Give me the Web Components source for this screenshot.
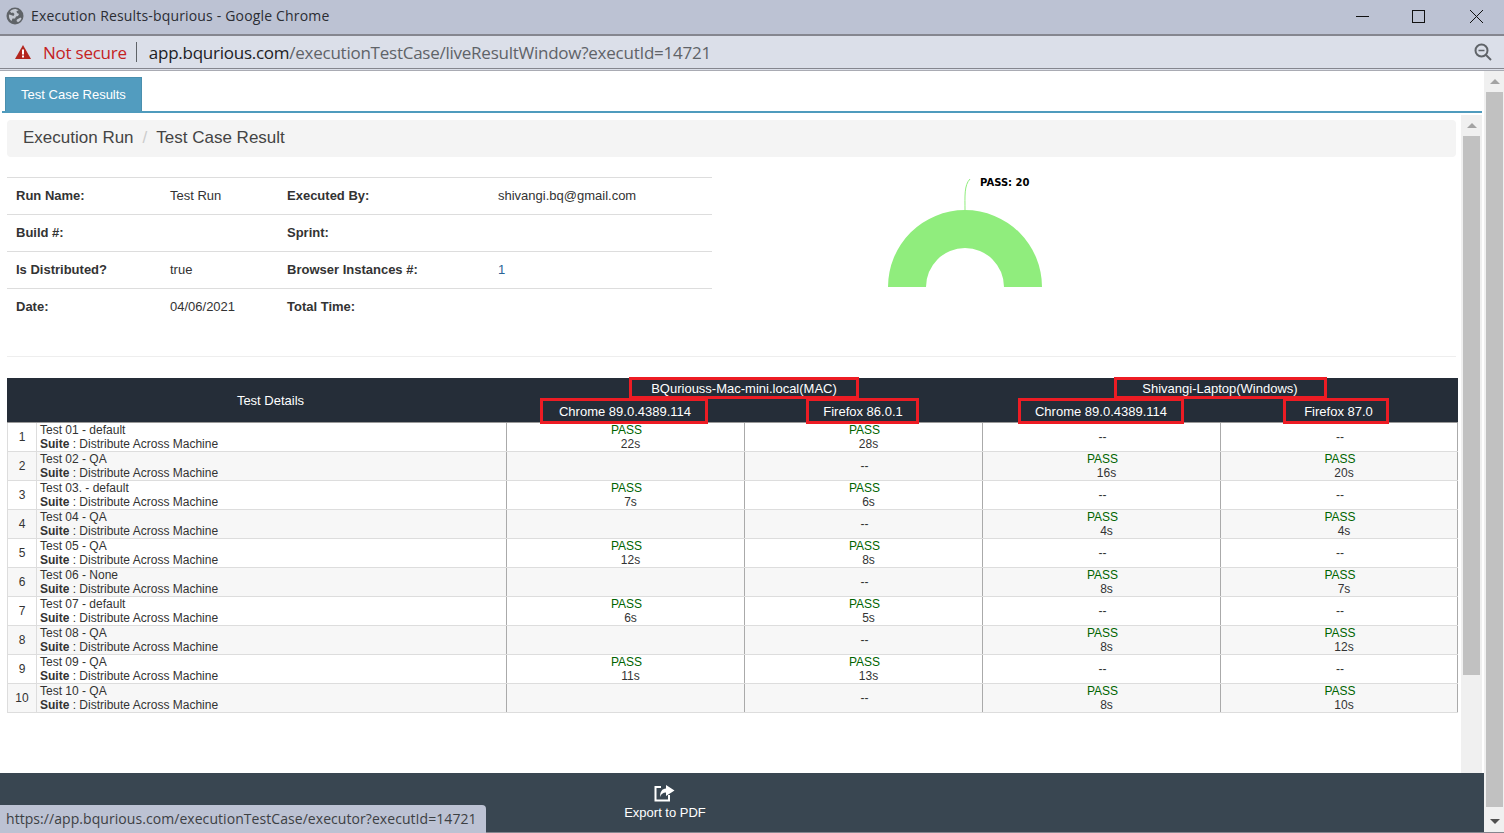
<!DOCTYPE html>
<html lang="en">
<head>
<meta charset="utf-8">
<title>Execution Results-bqurious</title>
<style>
html, body { margin: 0; height: 100%; overflow: hidden; background: #fff; }
body { font-family: "Liberation Sans", Arial, sans-serif; }
</style>
</head>
<body>
<app-window></app-window>
<script>
// Little helper, most parts here are static markup with a style block.
function define (tag, html) {
  customElements.define(tag, class extends HTMLElement {
    constructor () {
      super()
      this.attachShadow({ mode: 'open' }).innerHTML = html
    }
  })
}

define('title-bar', `
<style>
:host { display: flex; align-items: center; height: 34px; background: #bcc2d3; border-bottom: 2px solid #85868f; font: 14px "Open Sans", sans-serif; color: #2b2d33; }
.globe { margin-left: 6px; width: 18px; height: 18px; flex: none; margin-bottom: 3px; }
.name { margin-left: 7px; flex: 1; letter-spacing: .17px; margin-bottom: 3px; }
svg.win { flex: none; display: block; }
</style>
<svg class="globe" viewBox="0 0 18 18">
  <circle cx="9" cy="9" r="8.5" fill="#5f6368"/>
  <path d="M9 2C7 2.2 5 3 4 4.5L5.5 6 7 5.5 8.5 7 7.5 9 5 8 3 7.5C2.5 10 3.5 12.5 5.5 14L6.5 11.5 9 11.5 10 9.5 12 9 13 7 11 6 10.5 4 12.500 3.500C11.500 2.500 10 2 9 2Z" fill="#c3c7d0"/>
  <path d="M11 12.500L14.500 10.500 15.500 11.500C15 13 13.500 14.500 12 15.200L10.500 14Z" fill="#c3c7d0"/>
</svg>
<span class="name">Execution Results-bqurious - Google Chrome</span>
<svg class="win" width="148" height="34" viewBox="0 0 148 34" fill="none" stroke="#111" stroke-width="1">
  <path d="M0 16.500H13"/>
  <rect x="56.500" y="10.500" width="12" height="12"/>
  <path d="M114 10L127 23M127 10L114 23"/>
</svg>
`)

define('address-bar', `
<style>
:host { display: flex; align-items: center; height: 32px; background: #dbdfe9; border-bottom: 1px solid #85868f; box-shadow: 0 1px 0 #dbdfe9, 0 2px 0 #a9abb3; font: 17px "Open Sans", sans-serif; color: #5f6368; position: relative; }
.warn { margin-left: 15px; flex: none; }
.bad { margin-left: 12px; color: #c5221f; letter-spacing: -.24px; }
.sep { width: 1px; height: 20px; background: #5f6368; margin: 0 12px 0 9px; flex: none; }
.url { flex: 1; letter-spacing: -.25px; white-space: nowrap; }
.url b { font-weight: 400; color: #202124; }
.zoom { flex: none; margin-right: 12px; }
</style>
<svg class="warn" width="16" height="14" viewBox="0 0 16 14">
  <path d="M8 0L16 14H0Z" fill="#b3261e"/>
  <path d="M7 4.500H9V9.500H7ZM7 10.500H9V12.500H7Z" fill="#fff"/>
</svg>
<span class="bad">Not secure</span>
<span class="sep"></span>
<span class="url"><b>app.bqurious.com</b>/executionTestCase/liveResultWindow?executId=14721</span>
<svg class="zoom" width="18" height="18" viewBox="0 0 18 18" fill="none" stroke="#5f6368" stroke-width="2">
  <circle cx="7.500" cy="7.500" r="6"/>
  <path d="M11.500 11.500L17 17"/>
  <path d="M4.500 7.500H10.500" stroke-width="1.500"/>
</svg>
`)

customElements.define('scroll-bar', class extends HTMLElement {
  constructor () {
    super()
    this.attachShadow({ mode: 'open' }).innerHTML = `
<style>
:host { display: flex; flex-direction: column; align-items: center; flex: none; background: #f0f0f0; box-sizing: border-box; }
.up, .down { flex: none; height: 21px; display: flex; align-items: center; justify-content: center; }
.up::before { content: ""; border: 5px solid transparent; border-top: 0; border-bottom-color: #a3a3a3; }
.down::before { content: ""; border: 5px solid transparent; border-bottom: 0; border-top-color: #505050; }
.thumb { width: 17px; background: #c1c1c1; flex: none; }
.rest { flex: 1; }
:host([cut]) .down { display: none; }
</style>
<div class="up"></div>
<div class="thumb"></div>
<div class="rest"></div>
<div class="down"></div>`
    this.shadowRoot.querySelector('.thumb').style.height = this.getAttribute('thumb') + 'px'
  }
})

define('tab-strip', `
<style>
:host { display: block; height: 43px; box-sizing: border-box; padding: 7px 0 0 5px; margin-left: 2px; margin-right: 2px; border-bottom: 2px solid #4f9bbd; }
.tab { box-sizing: border-box; margin-left: -2px; width: 137px; height: 34px; background: #529cbf; border: 1px solid #4a8fae; border-bottom: 0; color: #fff; font-size: 13px; display: flex; align-items: center; justify-content: center; }
</style>
<div class="tab">Test Case Results</div>
`)

define('bread-crumb', `
<style>
:host { display: flex; align-items: center; height: 37px; box-sizing: border-box; background: #f4f4f4; border-radius: 4px; padding: 0 0 2px 16px; font-size: 17px; color: #444; }
i { font-style: normal; color: #ccc; margin: 0 9px; }
</style>
<span>Execution Run</span><i>/</i><span>Test Case Result</span>
`)

define('run-info', `
<style>
:host { display: grid; grid-template-columns: 163px 117px 211px 214px; grid-auto-rows: 37px; width: 705px; font-size: 13px; color: #333; flex: none; }
span { display: flex; align-items: center; border-top: 1px solid #ddd; height: 37px; box-sizing: border-box; padding-bottom: 2px; }
b { color: #333; }
.f { padding-left: 9px; }
</style>
<span class="f"><b>Run Name:</b></span><span>Test Run</span><span><b>Executed By:</b></span><span>shivangi.bq@gmail.com</span>
<span class="f"><b>Build #:</b></span><span></span><span><b>Sprint:</b></span><span></span>
<span class="f"><b>Is Distributed?</b></span><span>true</span><span><b>Browser Instances #:</b></span><span style="color:#2a6496">1</span>
<span class="f"><b>Date:</b></span><span>04/06/2021</span><span><b>Total Time:</b></span><span></span>
`)

define('pass-chart', `
<style>
:host { display: block; flex: none; }
svg { display: block; }
text { font: bold 10px "DejaVu Sans", sans-serif; fill: #000; }
</style>
<svg width="400" height="120" viewBox="0 0 400 120">
  <path d="M176 110A77 77 0 0 1 330 110H292A39 39 0 0 0 214 110Z" fill="#90ed7d"/>
  <path d="M253 33C253 20 252 8 258 2" fill="none" stroke="#90ed7d" stroke-width="1"/>
  <text x="268" y="9">PASS: 20</text>
</svg>
`)

define('box-mark', `
<style>
:host { display: inline-block; box-sizing: border-box; border: 3px solid #ed1c24; text-align: center; padding-top: 1px; }
</style>
<slot></slot>
`)

define('table-head', `
<style>
:host { display: grid; grid-template-columns: 30px 469px 238px 238px 238px 238px; grid-template-rows: 21px 23px; background: #252d38; color: #fff; font-size: 13px; text-align: center; }
.c { display: flex; align-items: center; justify-content: center; }
.details { grid-column: 2; grid-row: 1 / 3; padding-right: 2px; }
.m1 { grid-column: 3 / 5; grid-row: 1; }
.m2 { grid-column: 5 / 7; grid-row: 1; }
.s1 { grid-column: 3; grid-row: 2; }
.s2 { grid-column: 4; grid-row: 2; }
.s3 { grid-column: 5; grid-row: 2; }
.s4 { grid-column: 6; grid-row: 2; }
box-mark { line-height: 15px; }
.top box-mark { height: 22px; margin-top: -2px; }
.sub box-mark { height: 26px; margin-top: 1px; line-height: 20px; }
</style>
<div class="c details">Test Details</div>
<div class="c top m1"><box-mark style="width:230px">BQuriouss-Mac-mini.local(MAC)</box-mark></div>
<div class="c top m2"><box-mark style="width:213px">Shivangi-Laptop(Windows)</box-mark></div>
<div class="c sub s1"><box-mark style="width:168px;margin-right:3px;padding-left:3px">Chrome 89.0.4389.114</box-mark></div>
<div class="c sub s2"><box-mark style="width:113px;margin-right:2px;padding-left:2px">Firefox 86.0.1</box-mark></div>
<div class="c sub s3"><box-mark style="width:166px">Chrome 89.0.4389.114</box-mark></div>
<div class="c sub s4"><box-mark style="width:106px;margin-right:6px;padding-left:5px">Firefox 87.0</box-mark></div>
`)

customElements.define('result-row', class extends HTMLElement {
  constructor () {
    super()
    this.attachShadow({ mode: 'open' })
  }

  connectedCallback () {
    const cells = this.getAttribute('results').split(',').map(value => {
      if (value === '') return '<div class="cell"></div>'
      if (value === '--') return '<div class="cell dash">--</div>'
      return `<div class="cell"><span class="pass">PASS</span><span class="time">${value}</span></div>`
    }).join('')
    this.shadowRoot.innerHTML = `
<style>
:host { display: grid; grid-template-columns: 30px 469px 238px 238px 238px 238px; height: 29px; box-sizing: border-box; border-top: 1px solid #ddd; font-size: 12px; line-height: 14px; color: #333; }
:host([shade]) { background: #f7f7f7; }
:host([first]) { border-top-color: #999; }
.num { display: flex; align-items: center; justify-content: center; border-left: 1px solid #ddd; border-right: 1px solid #ddd; box-sizing: border-box; }
.test { padding-left: 3px; white-space: nowrap; }
.cell { border-left: 1px solid #aaa; display: flex; flex-direction: column; align-items: center; text-align: center; }
.cell:last-child { border-right: 1px solid #aaa; }
.dash { justify-content: center; padding-left: 2px; }
.pass { color: #006400; padding-left: 2px; }
.time { padding-left: 10px; }
b { font-weight: 700; }
</style>
<div class="num">${this.getAttribute('num')}</div>
<div class="test">${this.getAttribute('name')}<br><b>Suite</b> : Distribute Across Machine</div>
${cells}`
  }
})

const rows = [
  ['Test 01 - default', '22s,28s,--,--'],
  ['Test 02 - QA', ',--,16s,20s'],
  ['Test 03. - default', '7s,6s,--,--'],
  ['Test 04 - QA', ',--,4s,4s'],
  ['Test 05 - QA', '12s,8s,--,--'],
  ['Test 06 - None', ',--,8s,7s'],
  ['Test 07 - default', '6s,5s,--,--'],
  ['Test 08 - QA', ',--,8s,12s'],
  ['Test 09 - QA', '11s,13s,--,--'],
  ['Test 10 - QA', ',--,8s,10s']
]

customElements.define('results-table', class extends HTMLElement {
  constructor () {
    super()
    this.attachShadow({ mode: 'open' }).innerHTML = `
<style>
:host { display: block; width: 1451px; margin-top: 21px; }
#rows { border-bottom: 1px solid #ddd; }
</style>
<table-head></table-head>
<div id="rows"></div>`
    const list = this.shadowRoot.querySelector('#rows')
    rows.forEach((row, i) => {
      const el = document.createElement('result-row')
      el.setAttribute('num', i + 1)
      el.setAttribute('name', row[0])
      el.setAttribute('results', row[1])
      if (i % 2) el.setAttribute('shade', '')
      if (i === 0) el.setAttribute('first', '')
      list.appendChild(el)
    })
  }
})

define('foot-bar', `
<style>
:host { display: flex; justify-content: center; flex: none; height: 59px; width: 200px; }
.btn { display: flex; flex-direction: column; align-items: center; color: #fff; font-size: 13px; padding-top: 11px; }
svg { display: block; margin-bottom: 3px; }
</style>
<div class="btn">
  <svg width="21" height="18" viewBox="0 0 21 18">
    <path d="M12 1L20.500 6.500 12 12V8.500C9 8.500 7 10 6 13 6 8 8 4.500 12 4.500Z" fill="#fff"/>
    <path d="M7 3H1.500V16.500H15V11" fill="none" stroke="#fff" stroke-width="2"/>
  </svg>
  <span>Export to PDF</span>
</div>
`)

define('status-bubble', `
<style>
:host { position: absolute; left: 0; bottom: 0; width: 486px; height: 28px; box-sizing: border-box; background: #bcc2d3; border-top-right-radius: 4px; padding: 0 0 2px 6px; display: flex; align-items: center; font: 14px "Open Sans", sans-serif; letter-spacing: .06px; color: #3c4043; white-space: nowrap; }
</style>
https://app.bqurious.com/executionTestCase/executor?executId=14721
`)

define('app-window', `
<style>
:host { display: flex; flex-direction: column; height: 833px; position: relative; overflow: hidden; }
.content { flex: 1; display: flex; min-height: 0; border-bottom: 1px solid #85868f; padding-top: 1px; }
.main { width: 1484px; flex: none; display: flex; flex-direction: column; }
.panel { flex: 1; display: flex; min-height: 0; }
.page { width: 1454px; flex: none; padding: 7px 0 0 7px; overflow: hidden; }
bread-crumb { width: 1449px; }
.info { display: flex; height: 180px; box-sizing: border-box; margin-top: 20px; width: 1449px; border-bottom: 1px solid #eee; }
.inner { width: 21px; margin-top: 2px; margin-right: 2px; }
.foot { flex: none; height: 59px; background: #394651; padding-left: 565px; }
.outer { width: 20px; margin-top: 1px; padding: 0 1px 0 2px; }
</style>
<title-bar></title-bar>
<address-bar></address-bar>
<div class="content">
  <div class="main">
    <tab-strip></tab-strip>
    <div class="panel">
      <div class="page">
        <bread-crumb></bread-crumb>
        <div class="info">
          <run-info></run-info>
          <pass-chart></pass-chart>
        </div>
        <results-table></results-table>
      </div>
      <scroll-bar class="inner" thumb="539" cut></scroll-bar>
    </div>
    <div class="foot"><foot-bar></foot-bar></div>
  </div>
  <scroll-bar class="outer" thumb="715"></scroll-bar>
</div>
<status-bubble></status-bubble>
`)
</script>
</body>
</html>
